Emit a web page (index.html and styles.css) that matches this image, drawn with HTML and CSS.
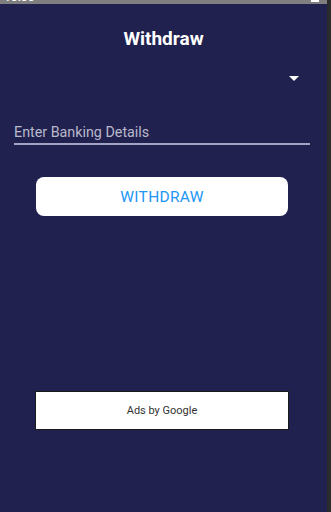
FILE: index.html
```html
<!DOCTYPE html>
<html>
<head>
<meta charset="utf-8">
<link rel="stylesheet" href="styles.css">
</head>
<body>
<div class="frame">
  <div class="screen">
    <div class="statusbar">
      <span class="time">10:00</span>
      <span class="battery"></span>
    </div>
    <h1 class="title">Withdraw</h1>
    <div class="spinner">
      <svg class="caret" width="10" height="5" viewBox="0 0 10 5"><path d="M0 0 L10 0 L5 5 Z" fill="#ffffff"/></svg>
    </div>
    <div class="field">
      <span class="hint">Enter Banking Details</span>
    </div>
    <div class="btn-wrap">
      <button class="btn">WITHDRAW</button>
    </div>
    <div class="spacer"></div>
    <div class="ad">Ads by Google</div>
  </div>
  <div class="edge"></div>
</div>
</body>
</html>
```
FILE: styles.css
```css
html, body {
  margin: 0;
  padding: 0;
  width: 331px;
  height: 512px;
  overflow: hidden;
  background: #21214f;
  font-family: Roboto, "Liberation Sans", sans-serif;
}
.frame {
  display: flex;
  width: 331px;
  height: 512px;
}
.screen {
  flex: 1;
  display: flex;
  flex-direction: column;
  background: #21214f;
}
.edge {
  width: 4px;
  background: #2b2b2b;
}
.statusbar {
  height: 4px;
  background: #7f7f7f;
  position: relative;
  overflow: hidden;
}
.time {
  position: absolute;
  left: 4px;
  top: -9px;
  color: #ffffff;
  font-size: 12px;
  font-weight: 500;
  line-height: 12px;
}
.battery {
  position: absolute;
  left: 311px;
  top: 0;
  width: 8px;
  height: 2px;
  background: #ffffff;
}
.title {
  margin: 24px 0 0;
  text-align: center;
  color: #ffffff;
  font-size: 19px;
  font-weight: 700;
  line-height: 22px;
}
.spinner {
  display: flex;
  justify-content: flex-end;
  padding: 0 28px 0 0;
  margin-top: 26px;
  height: 10px;
}
.caret {
  display: block;
}
.field {
  margin: 38px 17px 0 14px;
  border-bottom: 2px solid #a3a3c6;
  padding-bottom: 2px;
}
.hint {
  display: block;
  color: #b9b9cc;
  font-size: 14.3px;
  line-height: 17px;
}
.btn-wrap {
  display: flex;
  justify-content: center;
  margin-top: 32px;
  padding-right: 3px;
}
.btn {
  width: 252px;
  height: 39px;
  background: #ffffff;
  border: none;
  border-radius: 8px;
  color: #2196f3;
  font-family: Roboto, "Liberation Sans", sans-serif;
  font-size: 15.5px;
  letter-spacing: 0.3px;
  padding: 0;
}
.spacer {
  height: 175px;
}
.ad {
  box-sizing: border-box;
  margin-left: 35px;
  width: 254px;
  height: 39px;
  background: #ffffff;
  border: 1px solid #1a1a1a;
  display: flex;
  align-items: center;
  justify-content: center;
  color: #333333;
  font-size: 11px;
}
```
